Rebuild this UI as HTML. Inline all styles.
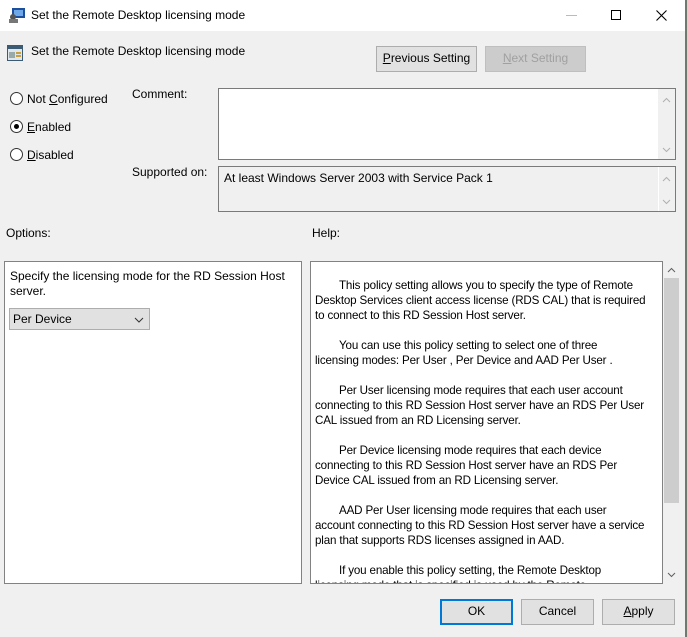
<!DOCTYPE html>
<html><head><style>
*{box-sizing:border-box;margin:0;padding:0}
body{width:687px;height:637px;background:#f0f0f0;font-family:"Liberation Sans",sans-serif;font-size:12px;color:#000;position:relative;overflow:hidden}
.a{position:absolute;white-space:nowrap}
.btn{position:absolute;border:1px solid #adadad;background:#e1e1e1;text-align:center;line-height:23px}
.box{position:absolute;border:1px solid #7a7a7a}
.radio{position:absolute;width:13px;height:13px;border:1px solid #333;border-radius:50%;background:#fff}
.ch{position:absolute}
</style></head><body>
<div class="a" style="left:0;top:0;width:687px;height:31px;background:#fff"></div>
<div class="a" style="left:685px;top:0;width:2px;height:637px;background:#6e7a6e"></div>
<svg class="a" style="left:8px;top:7px" width="18" height="17"><rect x="4" y="1" width="13" height="10" fill="#1e4f9c"/><rect x="6" y="3" width="9" height="6" fill="#6fa8e8"/><circle cx="5" cy="10" r="3" fill="#555"/><rect x="1" y="12" width="9" height="4" fill="#777"/></svg>
<div class="a" style="left:31px;top:8px">Set the Remote Desktop licensing mode</div>
<div class="a" style="left:566px;top:15px;width:11px;height:1px;background:#bbb"></div>
<div class="a" style="left:611px;top:10px;width:10px;height:10px;border:1px solid #000"></div>
<svg class="a" style="left:656px;top:10px" width="11" height="11"><path d="M0.5 0.5L10.5 10.5M10.5 0.5L0.5 10.5" stroke="#000" stroke-width="1.1"/></svg>
<svg class="a" style="left:7px;top:45px" width="16" height="16"><rect x="0" y="0" width="16" height="16" fill="#3b5a74"/><rect x="1" y="4" width="14" height="11" fill="#dfe6ec"/><rect x="2" y="7" width="6" height="6" fill="#9aa"/><rect x="9" y="7" width="5" height="2" fill="#c8a040"/><rect x="9" y="10" width="5" height="2" fill="#c8a040"/></svg>
<div class="a" style="left:31px;top:44px">Set the Remote Desktop licensing mode</div>
<div class="btn" style="left:376px;top:46px;width:101px;height:26px"><u>P</u>revious Setting</div>
<div class="btn" style="left:485px;top:46px;width:101px;height:26px;background:#ccc;border-color:#bfbfbf;color:#a0a0a0"><u>N</u>ext Setting</div>
<div class="radio" style="left:10px;top:92px"></div><div class="a" style="left:27px;top:92px">Not <u>C</u>onfigured</div>
<div class="radio" style="left:10px;top:120px"><div style="position:absolute;left:3px;top:3px;width:5px;height:5px;border-radius:50%;background:#000"></div></div><div class="a" style="left:27px;top:120px"><u>E</u>nabled</div>
<div class="radio" style="left:10px;top:148px"></div><div class="a" style="left:27px;top:148px"><u>D</u>isabled</div>
<div class="a" style="left:132px;top:87px">Comment:</div>
<div class="box" style="left:218px;top:88px;width:458px;height:72px;background:#fff"><div class="a" style="right:0;top:0;width:17px;height:70px;background:#f0f0f0"></div>
<svg class="ch" style="right:4px;top:8px" width="9" height="6"><path d="M1 5L4.5 1.5L8 5" stroke="#b0b0b0" fill="none"/></svg>
<svg class="ch" style="right:4px;top:58px" width="9" height="6"><path d="M1 1L4.5 4.5L8 1" stroke="#b0b0b0" fill="none"/></svg></div>
<div class="a" style="left:132px;top:165px">Supported on:</div>
<div class="box" style="left:218px;top:166px;width:458px;height:46px;background:#f0f0f0"><div class="a" style="left:5px;top:4px">At least Windows Server 2003 with Service Pack 1</div><div class="a" style="right:0;top:0;width:17px;height:44px;border-left:1px solid #fff"></div>
<svg class="ch" style="right:4px;top:9px" width="9" height="6"><path d="M1 5L4.5 1.5L8 5" stroke="#b0b0b0" fill="none"/></svg>
<svg class="ch" style="right:4px;top:32px" width="9" height="6"><path d="M1 1L4.5 4.5L8 1" stroke="#b0b0b0" fill="none"/></svg></div>
<div class="a" style="left:6px;top:226px">Options:</div>
<div class="a" style="left:312px;top:226px">Help:</div>
<div class="box" style="left:4px;top:261px;width:298px;height:323px;background:#fff;border-color:#828282">
<div class="a" style="left:5px;top:7px;line-height:15px">Specify the licensing mode for the RD Session Host<br>server.</div>
<div class="a" style="left:4px;top:46px;width:141px;height:22px;background:#e1e1e1;border:1px solid #adadad;padding-left:3px;line-height:20px">Per Device<svg style="position:absolute;right:5px;top:8px" width="10" height="6"><path d="M1 1L5 5L9 1" stroke="#333" fill="none"/></svg></div>
</div>
<div class="box" style="left:310px;top:261px;width:353px;height:323px;background:#fff;border-color:#828282;overflow:hidden">
<div class="a" style="left:4px;top:16px;line-height:15px;font-size:11.6px;letter-spacing:-0.15px">
<span style="padding-left:24px">This policy setting allows you to specify the type of Remote</span><br>Desktop Services client access license (RDS CAL) that is required<br>to connect to this RD Session Host server.<br><br>
<span style="padding-left:24px">You can use this policy setting to select one of three</span><br>licensing modes: Per User , Per Device and AAD Per User .<br><br>
<span style="padding-left:24px">Per User licensing mode requires that each user account</span><br>connecting to this RD Session Host server have an RDS Per User<br>CAL issued from an RD Licensing server.<br><br>
<span style="padding-left:24px">Per Device licensing mode requires that each device</span><br>connecting to this RD Session Host server have an RDS Per<br>Device CAL issued from an RD Licensing server.<br><br>
<span style="padding-left:24px">AAD Per User licensing mode requires that each user</span><br>account connecting to this RD Session Host server have a service<br>plan that supports RDS licenses assigned in AAD.<br><br>
<span style="padding-left:24px">If you enable this policy setting, the Remote Desktop</span><br>licensing mode that is specified is used by the Remote</div>
</div>
<div class="a" style="left:664px;top:278px;width:15px;height:225px;background:#cdcdcd"></div>
<svg class="ch" style="left:667px;top:267px" width="9" height="6"><path d="M1 5L4.5 1.5L8 5" stroke="#606060" fill="none"/></svg>
<svg class="ch" style="left:667px;top:572px" width="9" height="6"><path d="M1 1L4.5 4.5L8 1" stroke="#606060" fill="none"/></svg>
<div class="btn" style="left:440px;top:599px;width:73px;height:26px;border:2px solid #0078d7;line-height:21px">OK</div>
<div class="btn" style="left:521px;top:599px;width:73px;height:26px">Cancel</div>
<div class="btn" style="left:602px;top:599px;width:73px;height:26px"><u>A</u>pply</div>
</body></html>
